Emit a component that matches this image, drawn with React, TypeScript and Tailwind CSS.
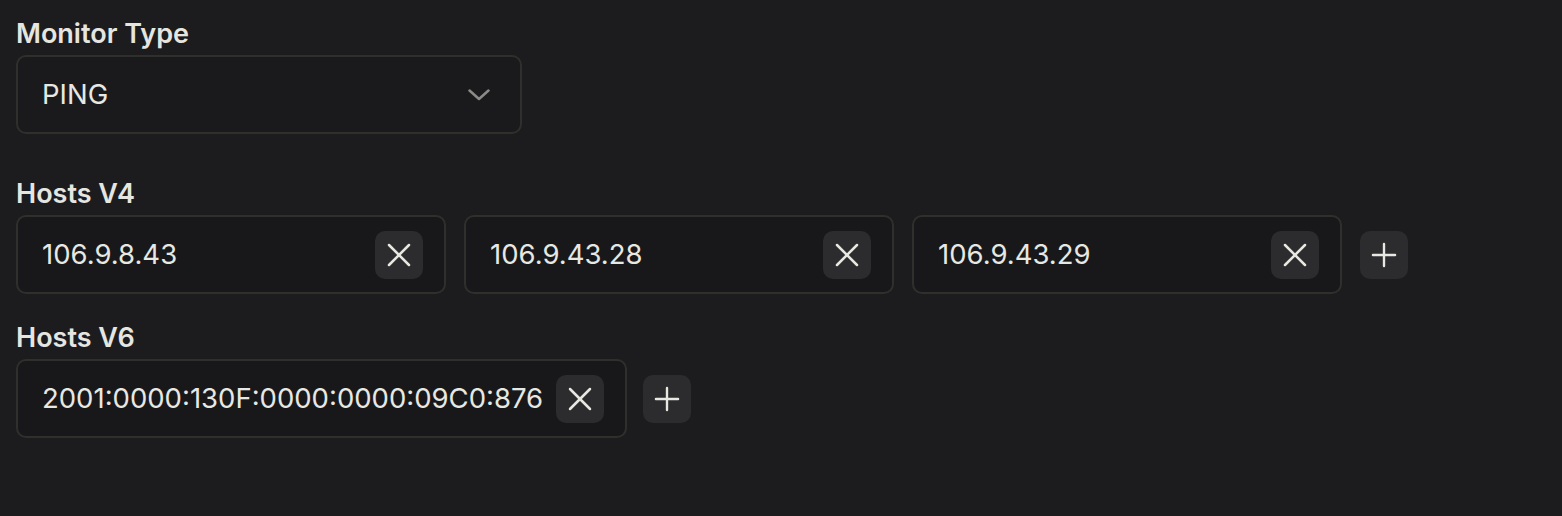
import { Plus, X } from 'lucide-react';

const hostsV4 = ['106.9.8.43', '106.9.43.28', '106.9.43.29'];
const hostsV6 = ['2001:0000:130F:0000:0000:09C0:876'];

function IconButton({ children }: { children: React.ReactNode }) {
  return (
    <button
      type="button"
      className="flex h-12 w-12 shrink-0 items-center justify-center rounded-[10px] bg-[#2c2c2e] text-[#e8e8e3]"
    >
      {children}
    </button>
  );
}

function HostInput({ value, width }: { value: string; width: string }) {
  return (
    <div
      className={`flex h-[79px] items-center gap-2.5 rounded-[10px] border-2 border-[#2f2f2b] bg-[#18181b] pl-6 pr-[21px] ${width}`}
    >
      <span className="min-w-0 flex-1 overflow-hidden whitespace-nowrap text-[27.5px] text-[#e8e8e3]">
        {value}
      </span>
      <IconButton>
        <X size={40} strokeWidth={1.5} />
      </IconButton>
    </div>
  );
}

export default function App() {
  return (
    <div className="min-h-screen bg-[#1c1c1e] px-4 pt-[18px] font-['Inter',sans-serif]">
      <div className="flex flex-col gap-[5px]">
        <label className="text-[27px] font-semibold leading-8 text-[#e6e6e1]">Monitor Type</label>
        <div className="flex h-[79px] w-[506px] items-center justify-between rounded-[10px] border-2 border-[#2f2f2b] bg-[#1a1a1c] pl-6 pr-[30px]">
          <span className="text-[27.5px] text-[#e8e8e3]">PING</span>
          <svg width="22" height="12" viewBox="0 0 22 12" fill="none">
            <polyline
              points="1.5,1.5 11,10 20.5,1.5"
              stroke="#8a8a88"
              strokeWidth="2.5"
              strokeLinecap="round"
              strokeLinejoin="round"
            />
          </svg>
        </div>
      </div>

      <div className="mt-[44px] flex flex-col gap-[5px]">
        <label className="text-[27px] font-semibold leading-8 text-[#e6e6e1]">Hosts V4</label>
        <div className="flex items-center gap-[18px]">
          {hostsV4.map((h) => (
            <HostInput key={h} value={h} width="w-[430px]" />
          ))}
          <IconButton>
            <Plus size={38} strokeWidth={1.5} />
          </IconButton>
        </div>
      </div>

      <div className="mt-[28px] flex flex-col gap-[5px]">
        <label className="text-[27px] font-semibold leading-8 text-[#e6e6e1]">Hosts V6</label>
        <div className="flex items-center gap-4">
          {hostsV6.map((h) => (
            <HostInput key={h} value={h} width="w-[611px]" />
          ))}
          <IconButton>
            <Plus size={38} strokeWidth={1.5} />
          </IconButton>
        </div>
      </div>
    </div>
  );
}
